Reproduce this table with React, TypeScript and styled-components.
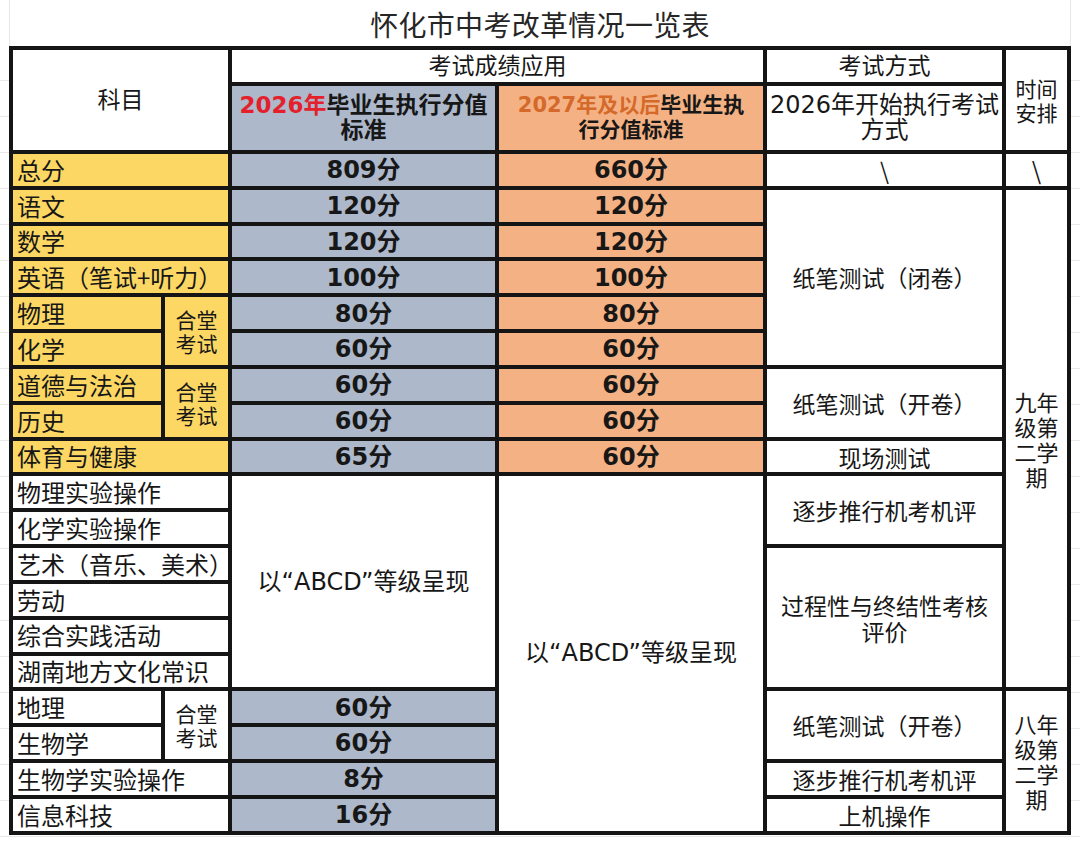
import React from "react";
import styled, { createGlobalStyle } from "styled-components";

const GlobalStyle = createGlobalStyle`
  html, body { margin: 0; padding: 0; background: #fff; }
  body {
    font-family: "Noto Sans CJK SC", sans-serif;
    color: #171717;
  }
  #root { width: 1080px; height: 841px; }
`;

type Tone = "white" | "yellow" | "blue" | "orange";
const tones: Record<Tone, string> = {
  white: "#ffffff",
  yellow: "#FDD763",
  blue: "#ADB8CA",
  orange: "#F4B183",
};

const Page = styled.div`
  width: 1080px;
  height: 841px;
  overflow: hidden;
  background: #fff;
  display: flex;
  flex-direction: column;
`;

const Title = styled.div`
  height: 46px;
  margin: 0 9px;
  box-sizing: border-box;
  border-left: 1px solid #e6e6e6;
  border-right: 1px solid #e6e6e6;
  display: flex;
  align-items: center;
  justify-content: center;
  padding-top: 2px;
  font-size: 28px;
  color: #262626;
  letter-spacing: 0.3px;
`;

const SheetArea = styled.div`
  flex: 1;
  background: linear-gradient(to bottom, transparent 35px, #e8e8e8 35px) 0 -1px / 100% 36px repeat;
`;

const Table = styled.div`
  display: grid;
  grid-template-columns: 148px 63px 263px 264px 235px 61px;
  grid-template-rows: 32px 64px repeat(19, 31.83px);
  gap: 4px;
  padding: 4px;
  margin-left: 9px;
  width: max-content;
  background: #151515;
`;

const Cell = styled.div<{ $col: string; $row: string; $tone?: Tone }>`
  grid-column: ${(p) => p.$col};
  grid-row: ${(p) => p.$row};
  background: ${(p) => tones[p.$tone ?? "white"]};
  display: flex;
  align-items: center;
  justify-content: center;
  text-align: center;
  white-space: nowrap;
  min-width: 0;
  font-size: 24px;
  line-height: 1.1;
`;

const Subject = styled(Cell)`
  justify-content: flex-start;
  padding-left: 4px;
  font-size: 24px;
`;

const Stack = styled(Cell)<{ $lh?: number; $fs?: number }>`
  font-size: ${(p) => p.$fs ?? 23}px;
  line-height: ${(p) => p.$lh ?? 25}px;
`;

const Score = styled(Cell)`
  font-family: "DejaVu Sans", "Noto Sans CJK SC", sans-serif;
  font-weight: 700;
  font-size: 24px;
  padding-top: 1px;
`;

const Grade = styled(Cell)`
  font-family: "DejaVu Sans", "Noto Sans CJK SC", sans-serif;
  font-size: 24px;
`;

const HeadCell = styled(Cell)<{ $fs?: number; $bold?: boolean }>`
  font-family: "DejaVu Sans", "Noto Sans CJK SC", sans-serif;
  font-size: ${(p) => p.$fs ?? 23}px;
  font-weight: ${(p) => (p.$bold ? 700 : 400)};
  line-height: 25px;
`;

const Accent = styled.span<{ $color: string }>`
  color: ${(p) => p.$color};
`;

const row = (r: number, span = 1) => `${r + 3} / span ${span}`;

const BACKSLASH = "\\";

type ScoreRow = [number, string];
const blueScores: ScoreRow[] = [
  [0, "809分"],
  [1, "120分"],
  [2, "120分"],
  [3, "100分"],
  [4, "80分"],
  [5, "60分"],
  [6, "60分"],
  [7, "60分"],
  [8, "65分"],
  [15, "60分"],
  [16, "60分"],
  [17, "8分"],
  [18, "16分"],
];
const orangeScores: ScoreRow[] = [
  [0, "660分"],
  [1, "120分"],
  [2, "120分"],
  [3, "100分"],
  [4, "80分"],
  [5, "60分"],
  [6, "60分"],
  [7, "60分"],
  [8, "60分"],
];

type SubjectRow = [number, string, Tone, boolean];
const subjects: SubjectRow[] = [
  [0, "总分", "yellow", true],
  [1, "语文", "yellow", true],
  [2, "数学", "yellow", true],
  [3, "英语（笔试+听力）", "yellow", true],
  [4, "物理", "yellow", false],
  [5, "化学", "yellow", false],
  [6, "道德与法治", "yellow", false],
  [7, "历史", "yellow", false],
  [8, "体育与健康", "yellow", true],
  [9, "物理实验操作", "white", true],
  [10, "化学实验操作", "white", true],
  [11, "艺术（音乐、美术）", "white", true],
  [12, "劳动", "white", true],
  [13, "综合实践活动", "white", true],
  [14, "湖南地方文化常识", "white", true],
  [15, "地理", "white", false],
  [16, "生物学", "white", false],
  [17, "生物学实验操作", "white", true],
  [18, "信息科技", "white", true],
];

type MethodRow = [number, number, React.ReactNode];
const methods: MethodRow[] = [
  [0, 1, BACKSLASH],
  [1, 5, "纸笔测试（闭卷）"],
  [6, 2, "纸笔测试（开卷）"],
  [8, 1, "现场测试"],
  [9, 2, "逐步推行机考机评"],
  [
    11,
    4,
    <>
      过程性与终结性考核
      <br />
      评价
    </>,
  ],
  [15, 2, "纸笔测试（开卷）"],
  [17, 1, "逐步推行机考机评"],
  [18, 1, "上机操作"],
];

const MergedNote = ({ r, tone }: { r: number; tone?: Tone }) => (
  <Stack $col="2" $row={row(r, 2)} $tone={tone} $fs={21} $lh={24}>
    合堂
    <br />
    考试
  </Stack>
);

const Term = ({ r, span, first }: { r: number; span: number; first: string }) => (
  <Stack $col="6" $row={row(r, span)} $fs={22} $lh={25}>
    {first}
    <br />
    级第
    <br />
    二学
    <br />
    期
  </Stack>
);

export default function App() {
  return (
    <Page>
      <GlobalStyle />
      <Title>怀化市中考改革情况一览表</Title>
      <SheetArea>
        <Table>
          <HeadCell $col="1 / span 2" $row="1 / span 2">
            科目
          </HeadCell>
          <HeadCell $col="3 / span 2" $row="1">
            考试成绩应用
          </HeadCell>
          <HeadCell $col="5" $row="1">
            考试方式
          </HeadCell>
          <Stack $col="6" $row="1 / span 2" $lh={24} $fs={21}>
            时间
            <br />
            安排
          </Stack>
          <HeadCell $col="3" $row="2" $tone="blue" $bold>
            <span>
              <Accent $color="#E3202B">2026年</Accent>毕业生执行分值
              <br />
              标准
            </span>
          </HeadCell>
          <HeadCell $col="4" $row="2" $tone="orange" $bold $fs={21}>
            <span>
              <Accent $color="#D4692A">2027年及以后</Accent>毕业生执
              <br />
              行分值标准
            </span>
          </HeadCell>
          <HeadCell $col="5" $row="2" $fs={24}>
            <span>
              2026年开始执行考试
              <br />
              方式
            </span>
          </HeadCell>

          {subjects.map(([r, name, tone, full]) => (
            <Subject key={`s${r}`} $col={full ? "1 / span 2" : "1"} $row={row(r)} $tone={tone}>
              {name}
            </Subject>
          ))}
          <MergedNote r={4} tone="yellow" />
          <MergedNote r={6} tone="yellow" />
          <MergedNote r={15} />

          {blueScores.map(([r, v]) => (
            <Score key={`b${r}`} $col="3" $row={row(r)} $tone="blue">
              {v}
            </Score>
          ))}
          <Grade $col="3" $row={row(9, 6)}>以“ABCD”等级呈现</Grade>

          {orangeScores.map(([r, v]) => (
            <Score key={`o${r}`} $col="4" $row={row(r)} $tone="orange">
              {v}
            </Score>
          ))}
          <Grade $col="4" $row={row(9, 10)}>以“ABCD”等级呈现</Grade>

          {methods.map(([r, span, text]) => (
            <Stack key={`m${r}`} $col="5" $row={row(r, span)} $fs={23} $lh={26}>
              <span>{text}</span>
            </Stack>
          ))}

          <Stack $col="6" $row={row(0)} $fs={24}>
            {BACKSLASH}
          </Stack>
          <Term r={1} span={14} first="九年" />
          <Term r={15} span={4} first="八年" />
        </Table>
      </SheetArea>
    </Page>
  );
}
